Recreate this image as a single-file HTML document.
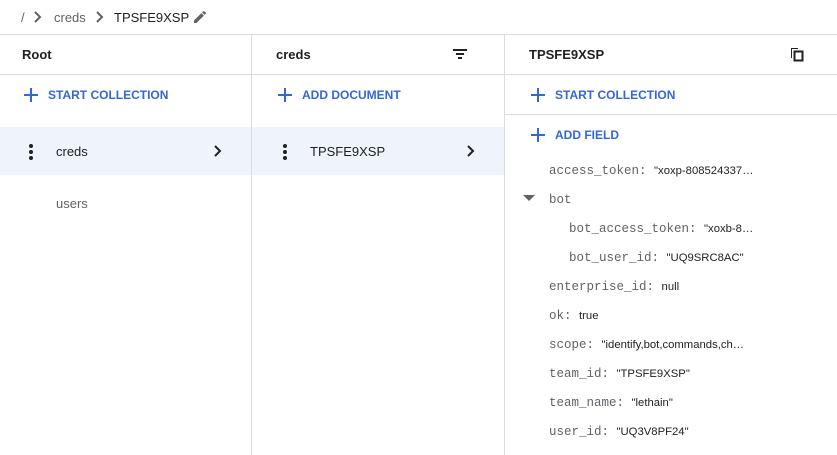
<!DOCTYPE html>
<html><head><style>
*{margin:0;padding:0;box-sizing:border-box}
body{width:837px;height:455px;background:#fff;font-family:"Liberation Sans",Arial,sans-serif;position:relative;overflow:hidden;color:#202124}
.a{position:absolute;white-space:nowrap}
.hl{position:absolute;height:1px;background:#dadce0}
.vl{position:absolute;width:1px;background:#dadce0;top:34px;bottom:0}
.h{font-size:13px;font-weight:bold;color:#202124}
.btn{font-size:12px;font-weight:bold;color:#3367d6}
.plus{position:absolute;width:14px;height:14px}
.plus:before{content:"";position:absolute;left:6px;top:0;width:2px;height:14px;background:#3367d6}
.plus:after{content:"";position:absolute;left:0;top:6px;width:14px;height:2px;background:#3367d6}
.k{font-family:"Liberation Mono",monospace;font-size:12.5px;color:#5f6368}
.v{font-size:11.3px;color:#202124}
.dots{position:absolute;width:4px}
.dots i{display:block;width:4px;height:4px;border-radius:2px;background:#202124;margin-bottom:2px}
</style></head><body>
<div class="a" style="left:21px;top:10px;font-size:13px;color:#5f6368">/</div>
<svg class="a" style="left:33px;top:11px" width="10" height="12" viewBox="0 0 10 12"><path d="M2 1l5 5-5 5" stroke="#5f6368" stroke-width="2" fill="none"/></svg>
<div class="a" style="left:54px;top:10px;font-size:13px;color:#5f6368">creds</div>
<svg class="a" style="left:95px;top:11px" width="10" height="12" viewBox="0 0 10 12"><path d="M2 1l5 5-5 5" stroke="#5f6368" stroke-width="2" fill="none"/></svg>
<div class="a" style="left:114px;top:10px;font-size:13px;color:#202124">TPSFE9XSP</div>
<svg class="a" style="left:192px;top:9px" width="16" height="16" viewBox="0 0 24 24"><path d="M3 17.25V21h3.75L17.81 9.94l-3.75-3.75L3 17.25zM20.71 7.04a1 1 0 000-1.41l-2.34-2.34a1 1 0 00-1.41 0l-1.83 1.83 3.75 3.75 1.83-1.83z" fill="#5f6368"/></svg>
<div class="hl" style="left:0;right:0;top:34px"></div>
<div class="hl" style="left:0;right:0;top:74px"></div>
<div class="hl" style="left:505px;right:0;top:114px"></div>
<div class="vl" style="left:251px"></div>
<div class="vl" style="left:504px"></div>
<div class="a" style="left:0;top:127px;width:251px;height:48px;background:#eff3fc"></div>
<div class="a" style="left:252px;top:127px;width:252px;height:48px;background:#eff3fc"></div>
<div class="a h" style="left:22px;top:47px">Root</div>
<div class="a h" style="left:276px;top:47px">creds</div>
<div class="a h" style="left:529px;top:47px">TPSFE9XSP</div>
<svg class="a" style="left:452px;top:48px" width="16" height="12" viewBox="0 0 16 12"><path d="M1 2h14M4 6h8M6 10h4" stroke="#202124" stroke-width="2"/></svg>
<svg class="a" style="left:790px;top:47px" width="14" height="15" viewBox="0 0 14 15"><path d="M1 1h7v1H2v9H1z" fill="#202124"/><rect x="4.5" y="4.5" width="8" height="9" fill="none" stroke="#202124" stroke-width="2"/></svg>
<div class="plus" style="left:24px;top:88px"></div><div class="a btn" style="left:48px;top:88px">START COLLECTION</div>
<div class="plus" style="left:278px;top:88px"></div><div class="a btn" style="left:302px;top:88px">ADD DOCUMENT</div>
<div class="plus" style="left:531px;top:88px"></div><div class="a btn" style="left:555px;top:88px">START COLLECTION</div>
<div class="plus" style="left:531px;top:128px"></div><div class="a btn" style="left:555px;top:128px">ADD FIELD</div>
<div class="dots" style="left:29px;top:144px"><i></i><i></i><i></i></div>
<div class="a" style="left:56px;top:144px;font-size:13px">creds</div>
<svg class="a" style="left:213px;top:145px" width="10" height="12" viewBox="0 0 10 12"><path d="M2 1l5 5-5 5" stroke="#202124" stroke-width="2" fill="none"/></svg>
<div class="a" style="left:56px;top:196px;font-size:13px;color:#5f6368">users</div>
<div class="dots" style="left:283px;top:144px"><i></i><i></i><i></i></div>
<div class="a" style="left:310px;top:144px;font-size:13px">TPSFE9XSP</div>
<svg class="a" style="left:466px;top:145px" width="10" height="12" viewBox="0 0 10 12"><path d="M2 1l5 5-5 5" stroke="#202124" stroke-width="2" fill="none"/></svg>
<div class="a" style="left:549px;top:161px"><span class="k">access_token: </span><span class="v">"xoxp-808524337…</span></div>
<svg class="a" style="left:523px;top:195px" width="12" height="7" viewBox="0 0 12 7"><path d="M0 0h12L6 6z" fill="#5f6368"/></svg>
<div class="a" style="left:549px;top:190px"><span class="k">bot</span></div>
<div class="a" style="left:569px;top:219px"><span class="k">bot_access_token: </span><span class="v">"xoxb-8…</span></div>
<div class="a" style="left:569px;top:248px"><span class="k">bot_user_id: </span><span class="v">"UQ9SRC8AC"</span></div>
<div class="a" style="left:549px;top:277px"><span class="k">enterprise_id: </span><span class="v">null</span></div>
<div class="a" style="left:549px;top:306px"><span class="k">ok: </span><span class="v">true</span></div>
<div class="a" style="left:549px;top:335px"><span class="k">scope: </span><span class="v">"identify,bot,commands,ch…</span></div>
<div class="a" style="left:549px;top:364px"><span class="k">team_id: </span><span class="v">"TPSFE9XSP"</span></div>
<div class="a" style="left:549px;top:393px"><span class="k">team_name: </span><span class="v">"lethain"</span></div>
<div class="a" style="left:549px;top:422px"><span class="k">user_id: </span><span class="v">"UQ3V8PF24"</span></div>
</body></html>
